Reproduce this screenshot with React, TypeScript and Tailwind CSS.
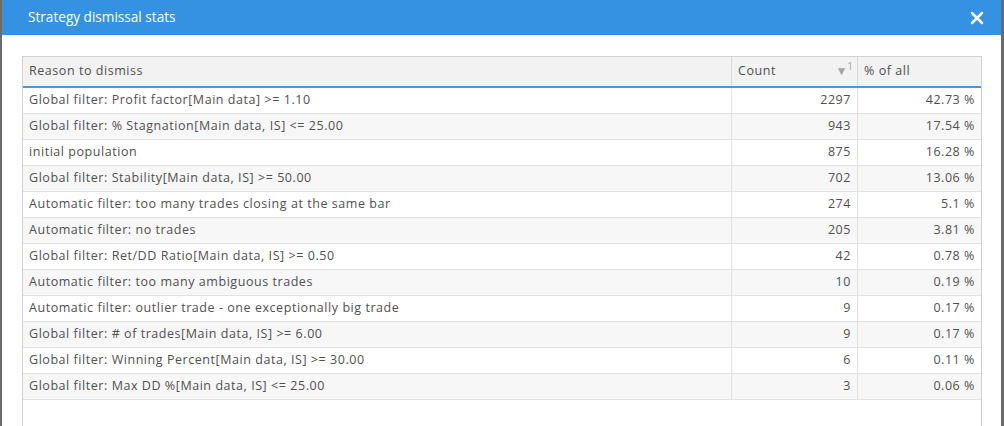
import { X } from "lucide-react";

const rows: [string, number, string][] = [
    ["Global filter: Profit factor[Main data] >= 1.10", 2297, "42.73 %"],
    ["Global filter: % Stagnation[Main data, IS] <= 25.00", 943, "17.54 %"],
    ["initial population", 875, "16.28 %"],
    ["Global filter: Stability[Main data, IS] >= 50.00", 702, "13.06 %"],
    ["Automatic filter: too many trades closing at the same bar", 274, "5.1 %"],
    ["Automatic filter: no trades", 205, "3.81 %"],
    ["Global filter: Ret/DD Ratio[Main data, IS] >= 0.50", 42, "0.78 %"],
    ["Automatic filter: too many ambiguous trades", 10, "0.19 %"],
    ["Automatic filter: outlier trade - one exceptionally big trade", 9, "0.17 %"],
    ["Global filter: # of trades[Main data, IS] >= 6.00", 9, "0.17 %"],
    ["Global filter: Winning Percent[Main data, IS] >= 30.00", 6, "0.11 %"],
    ["Global filter: Max DD %[Main data, IS] <= 25.00", 3, "0.06 %"],
];

const App = () => {
    return (
        <div className="w-[1004px] h-[426px] overflow-hidden bg-[#6b6b6b] px-[2px] pr-[3px] font-['Open_Sans',sans-serif]">
            <div className="h-full bg-white flex flex-col">
                {/* dialog title */}
                <div className="h-[35px] shrink-0 bg-[#3592e2] flex items-center justify-between pl-[26px] pr-[14px]">
                    <h1 className="text-white text-[13.6px] leading-none pb-[1px]">Strategy dismissal stats</h1>
                    <X className="text-white" size={20} strokeWidth={3} />
                </div>

                <div className="pt-[21px] pl-[20px] pr-[19px] flex-1">
                    <div className="border border-[#d2d2d2] border-b-0 h-full text-[12.5px] tracking-[0.55px] text-[#505050]">
                        <div className="flex h-[31px] bg-[#f2f2f2] border-b-2 border-[#3c9be6]">
                            <div className="w-[709px] px-[6px] flex items-center border-r border-[#d9d9d9]">Reason to dismiss</div>
                            <div className="w-[126px] pl-[6px] pr-[4px] flex items-center justify-between border-r border-[#d9d9d9]">
                                <span>Count</span>
                                <span className="text-[#a5a5a5] text-[12px] leading-none tracking-normal pb-[2px]">▼<sup className="text-[10px]">1</sup></span>
                            </div>
                            <div className="flex-1 px-[6px] flex items-center">% of all</div>
                        </div>
                        {rows.map(([reason, count, pct], i) => (
                            <div key={i} className={`flex h-[26px] border-b border-[#e2e2e2] ${i % 2 ? "bg-[#f7f7f7]" : "bg-white"}`}>
                                <div className="w-[709px] px-[6px] flex items-center border-r border-[#e2e2e2]">{reason}</div>
                                <div className="w-[126px] px-[6px] flex items-center justify-end border-r border-[#e2e2e2]">{count}</div>
                                <div className="flex-1 px-[6px] flex items-center justify-end">{pct}</div>
                            </div>
                        ))}
                    </div>
                </div>
            </div>
        </div>
    );
};

export default App;
